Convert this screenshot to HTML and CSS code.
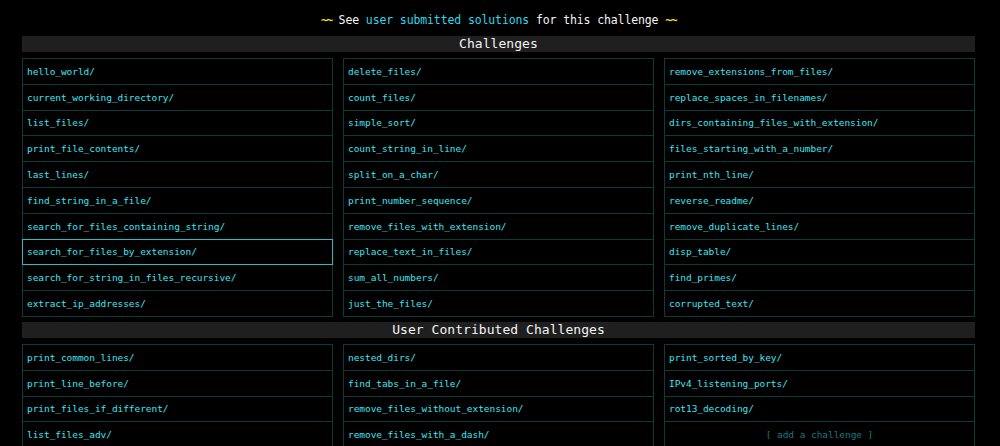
FILE: index.html
```html
<!DOCTYPE html>
<html>
<head>
<meta charset="utf-8">
<link rel="stylesheet" href="styles.css">
</head>
<body>
<div class="page">
  <p class="notice"><span class="wave">~~</span> See <a class="notice-link" href="#">user submitted solutions</a> for this challenge <span class="wave">~~</span></p>

  <h2 class="bar">Challenges</h2>
  <div class="grid">
    <div class="col">
      <a class="cell" href="#">hello_world/</a>
      <a class="cell" href="#">current_working_directory/</a>
      <a class="cell" href="#">list_files/</a>
      <a class="cell" href="#">print_file_contents/</a>
      <a class="cell" href="#">last_lines/</a>
      <a class="cell" href="#">find_string_in_a_file/</a>
      <a class="cell" href="#">search_for_files_containing_string/</a>
      <a class="cell active" href="#">search_for_files_by_extension/</a>
      <a class="cell" href="#">search_for_string_in_files_recursive/</a>
      <a class="cell" href="#">extract_ip_addresses/</a>
    </div>
    <div class="col">
      <a class="cell" href="#">delete_files/</a>
      <a class="cell" href="#">count_files/</a>
      <a class="cell" href="#">simple_sort/</a>
      <a class="cell" href="#">count_string_in_line/</a>
      <a class="cell" href="#">split_on_a_char/</a>
      <a class="cell" href="#">print_number_sequence/</a>
      <a class="cell" href="#">remove_files_with_extension/</a>
      <a class="cell" href="#">replace_text_in_files/</a>
      <a class="cell" href="#">sum_all_numbers/</a>
      <a class="cell" href="#">just_the_files/</a>
    </div>
    <div class="col">
      <a class="cell" href="#">remove_extensions_from_files/</a>
      <a class="cell" href="#">replace_spaces_in_filenames/</a>
      <a class="cell" href="#">dirs_containing_files_with_extension/</a>
      <a class="cell" href="#">files_starting_with_a_number/</a>
      <a class="cell" href="#">print_nth_line/</a>
      <a class="cell" href="#">reverse_readme/</a>
      <a class="cell" href="#">remove_duplicate_lines/</a>
      <a class="cell" href="#">disp_table/</a>
      <a class="cell" href="#">find_primes/</a>
      <a class="cell" href="#">corrupted_text/</a>
    </div>
  </div>

  <h2 class="bar">User Contributed Challenges</h2>
  <div class="grid">
    <div class="col">
      <a class="cell" href="#">print_common_lines/</a>
      <a class="cell" href="#">print_line_before/</a>
      <a class="cell" href="#">print_files_if_different/</a>
      <a class="cell" href="#">list_files_adv/</a>
    </div>
    <div class="col">
      <a class="cell" href="#">nested_dirs/</a>
      <a class="cell" href="#">find_tabs_in_a_file/</a>
      <a class="cell" href="#">remove_files_without_extension/</a>
      <a class="cell" href="#">remove_files_with_a_dash/</a>
    </div>
    <div class="col">
      <a class="cell" href="#">print_sorted_by_key/</a>
      <a class="cell" href="#">IPv4_listening_ports/</a>
      <a class="cell" href="#">rot13_decoding/</a>
      <a class="cell add" href="#">[ add a challenge ]</a>
    </div>
  </div>
</div>
</body>
</html>
```

FILE: styles.css
```css
html, body {
  margin: 0;
  padding: 0;
  background: #000;
  overflow: hidden;
}

.page {
  width: 953px;
  margin: 0 0 0 22px;
  padding-top: 12px;
  font-family: "DejaVu Sans Mono", "Liberation Mono", monospace;
  color: #f0f0f0;
}

.notice {
  margin: 0 0 8px 0;
  text-align: center;
  font-size: 11.5px;
  line-height: 16px;
  letter-spacing: -0.12px;
  color: #f4f4f4;
}

.wave {
  color: #f2e400;
  font-weight: bold;
  letter-spacing: -1.5px;
}

.notice-link {
  color: #2ed8ea;
  text-decoration: none;
}

.bar {
  margin: 0 0 6px 0;
  height: 16px;
  line-height: 16px;
  background: #1f1f1f;
  text-align: center;
  font-size: 13px;
  font-weight: normal;
  color: #f4f4f4;
  letter-spacing: 0.05px;
}

.grid {
  display: grid;
  grid-template-columns: repeat(3, 1fr);
  column-gap: 10px;
  margin-bottom: 5px;
}

.col {
  display: flex;
  flex-direction: column;
}

.cell {
  display: flex;
  align-items: center;
  box-sizing: border-box;
  height: 26.8px;
  margin-top: -1px;
  padding: 0 4px;
  border: 1px solid #0b3a3a;
  color: #3ee6f2;
  text-decoration: none;
  font-size: 9.5px;
  letter-spacing: -0.06px;
}

.cell:first-child {
  margin-top: 0;
}

.cell.active {
  border-color: #2cbcc4;
  position: relative;
}

.cell.add {
  justify-content: center;
  color: #17797f;
}
```
